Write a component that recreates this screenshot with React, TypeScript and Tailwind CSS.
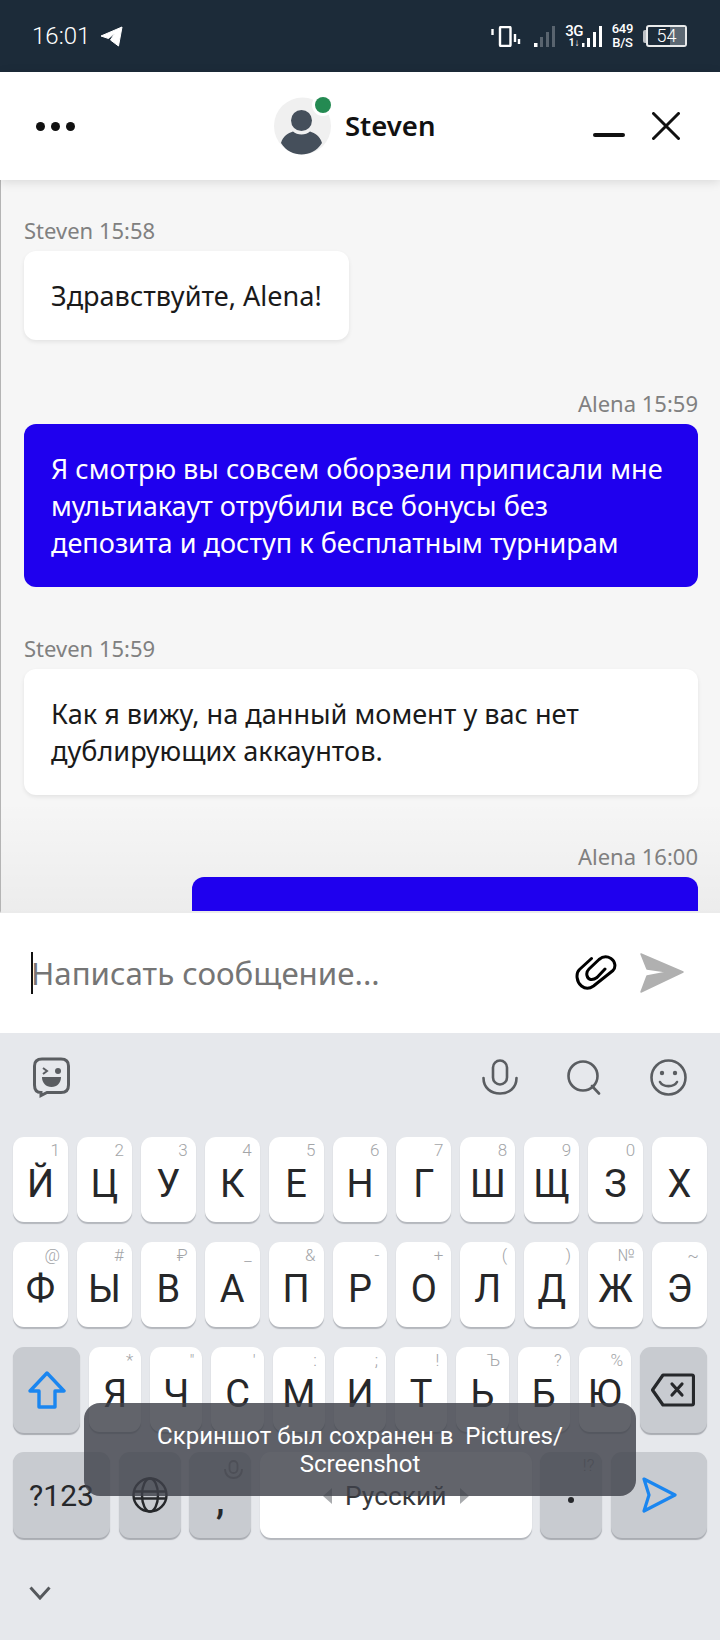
import { ReactNode } from 'react';

const rowOne = [
  ['Й', '1'], ['Ц', '2'], ['У', '3'], ['К', '4'], ['Е', '5'], ['Н', '6'],
  ['Г', '7'], ['Ш', '8'], ['Щ', '9'], ['З', '0'], ['Х', ''],
];
const rowTwo = [
  ['Ф', '@'], ['Ы', '#'], ['В', '₽'], ['А', '_'], ['П', '&'], ['Р', '-'],
  ['О', '+'], ['Л', '('], ['Д', ')'], ['Ж', '№'], ['Э', '~'],
];
const rowThree = [
  ['Я', '*'], ['Ч', '"'], ['С', "'"], ['М', ':'], ['И', ';'], ['Т', '!'],
  ['Ь', 'Ъ'], ['Б', '?'], ['Ю', '%'],
];

function Key({ label, hint }: { label: string; hint: string }) {
  return (
    <div className="relative flex-1 h-[85px] bg-white rounded-[11px] shadow-[0_1.5px_1px_#b4b7bd] flex items-center justify-center pt-[9px]">
      <span className="absolute top-[3px] right-[8px] text-[17px] leading-[20px] font-light text-[#a3a5a8]">{hint}</span>
      <span className="text-[38px] leading-[44px] text-[#262729]">{label}</span>
    </div>
  );
}

function GreyKey({ className, children }: { className: string; children: ReactNode }) {
  return (
    <div className={`relative h-[86px] bg-[#c8cbd0] rounded-[11px] shadow-[0_1.5px_1px_#a9acb2] flex items-center justify-center ${className}`}>
      {children}
    </div>
  );
}

function StatusBar() {
  return (
    <div className="h-[72px] bg-[#1c2b39] flex items-center justify-between pl-[32px] pr-[33px] text-white">
      <div className="flex items-center gap-[10px]">
        <span className="text-[24px] leading-[30px] font-light">16:01</span>
        <svg width="23" height="21" viewBox="0 0 23 21" fill="#fff" stroke="#fff" strokeLinejoin="round">
          <path d="M22 1 L1 10 L8.5 12.5 L15 7 L10.5 14 L18.5 20 Z" />
        </svg>
      </div>
      <div className="flex items-center">
        <svg width="30" height="21" viewBox="0 0 30 21" fill="none" stroke="#fff" className="mr-[13px]">
          <rect x="9" y="1" width="10.5" height="19" strokeWidth="2.4" rx="1" />
          <path d="M1.5 3v6M5.5 3v0" strokeWidth="2.4" />
          <path d="M24 8v8M28 13v5" strokeWidth="2.4" />
        </svg>
        <svg width="21" height="21" viewBox="0 0 21 21" className="mr-[11px]">
          <rect x="0" y="17" width="3.5" height="4" fill="#fff" />
          <rect x="6" y="11" width="3" height="10" fill="#59646f" />
          <rect x="12" y="6" width="3" height="15" fill="#59646f" />
          <rect x="18" y="0" width="3" height="21" fill="#59646f" />
        </svg>
        <div className="flex flex-col items-center w-[17px] mr-[-3px]">
          <span className="text-[15px] font-medium leading-[13px] tracking-[-0.5px]">3G</span>
          <span className="text-[10px] font-bold leading-[10px]">1↓</span>
        </div>
        <svg width="22" height="21" viewBox="0 0 22 21" fill="#fff" className="mr-[10px]">
          <rect x="2" y="17" width="2.5" height="4" />
          <rect x="7" y="12" width="3" height="9" />
          <rect x="13" y="6" width="3" height="15" />
          <rect x="19" y="0" width="3" height="21" />
        </svg>
        <div className="flex flex-col items-center font-medium text-[13px] leading-[14px] mr-[10px] tracking-[-0.3px]">
          <span>649</span>
          <span>B/S</span>
        </div>
        <div className="w-[3px] h-[13px] bg-white/70 rounded-l-[2px]" />
        <div className="relative w-[41px] h-[22px] border-2 border-white/90 rounded-[3px] flex items-center justify-end overflow-hidden">
          <div className="w-[15px] h-full bg-[#5c6873]" />
          <span className="absolute inset-0 flex items-center justify-center text-[18px] font-light leading-none">54</span>
        </div>
      </div>
    </div>
  );
}

function ChatHeader() {
  return (
    <div className="relative z-10 h-[108px] bg-white shadow-[0_2px_10px_rgba(0,0,0,0.12)] flex items-center pl-[36px] pr-[40px]">
      <div className="flex gap-[6px] w-[100px]">
        <div className="w-[9px] h-[9px] rounded-full bg-[#111]" />
        <div className="w-[9px] h-[9px] rounded-full bg-[#111]" />
        <div className="w-[9px] h-[9px] rounded-full bg-[#111]" />
      </div>
      <div className="flex items-center gap-[14px] ml-[138px]">
        <div className="relative">
          <svg width="57" height="58" viewBox="0 0 57 58">
            <circle cx="28.5" cy="29" r="28.5" fill="#f0f0f0" />
            <circle cx="27.5" cy="23.5" r="10.5" fill="#454f5b" />
            <path d="M7 46 C9 39 14 36 19 34.5 C23 38.5 32 38.5 36 34.5 C41 36 46 39 48 46 C43 54 35 57.5 27.5 57.5 C20 57.5 12 54 7 46 Z" fill="#454f5b" />
          </svg>
          <div className="absolute top-[-3px] right-[-3px] w-[22px] h-[22px] rounded-full bg-white flex items-center justify-center">
            <div className="w-[16px] h-[16px] rounded-full bg-[#248a52]" />
          </div>
        </div>
        <span className="text-[27.5px] leading-[34px] font-semibold text-[#111]">Steven</span>
      </div>
      <div className="flex items-center gap-[27px] ml-auto">
        <div className="w-[32px] h-[4px] bg-[#111] rounded-full mt-[18px]" />
        <svg width="28" height="28" viewBox="0 0 28 28" fill="none" stroke="#111" strokeWidth="3" strokeLinecap="round">
          <path d="M1.5 1.5 L26.5 26.5 M26.5 1.5 L1.5 26.5" />
        </svg>
      </div>
    </div>
  );
}

function Message({ author, time, mine, text, className }: { author: string; time: string; mine?: boolean; text: ReactNode; className: string }) {
  return (
    <div className={`flex flex-col ${mine ? 'items-end' : 'items-start'}`}>
      <div className="text-[22px] leading-[30px] text-[#808080] mb-[6px]">{author} {time}</div>
      <div className={`rounded-[12px] px-[27px] text-[27.1px] leading-[37px] ${mine ? 'bg-[#1f00ee] text-white' : 'bg-white text-[#1a1a1a] shadow-[0_2px_4px_rgba(0,0,0,0.08)]'} ${className}`}>
        {text}
      </div>
    </div>
  );
}

function ChatBody() {
  return (
    <div className="relative h-[733px] overflow-hidden bg-[#f6f6f6] border-l border-[#b4b4b4] border-b-2 border-b-[#ebebeb] pl-[23px] pr-[22px] pt-[35px]">
      <div className="absolute left-0 right-0 bottom-0 h-[110px] bg-gradient-to-b from-transparent to-[#0000000a]" />
      <div className="relative flex flex-col gap-[46px]">
        <Message author="Steven" time="15:58" text="Здравствуйте, Alena!" className="py-[26px] mb-[2px]" />
        <Message author="Alena" time="15:59" mine className="py-[26px] w-full" text={<>Я смотрю вы совсем оборзели приписали мне<br />мультиакаут отрубили все бонусы без<br />депозита и доступ к бесплатным турнирам</>} />
        <Message author="Steven" time="15:59" className="py-[26px] w-full" text={<>Как я вижу, на данный момент у вас нет<br />дублирующих аккаунтов.</>} />
        <Message author="Alena" time="16:00" mine className="w-[506px] h-[120px]" text="" />
      </div>
    </div>
  );
}

function InputBar() {
  return (
    <div className="h-[120px] bg-white flex items-center pl-[31px] pr-[36px]">
      <div className="w-[2px] h-[42px] bg-[#111]" />
      <span className="text-[31.3px] leading-[40px] text-[#757575] flex-1 -ml-[2px]">Написать сообщение...</span>
      <svg width="42" height="36" viewBox="0 0 42 36" fill="none" stroke="#000" strokeWidth="3" strokeLinecap="round" strokeLinejoin="round" className="mr-[23px]">
        <path d="M16.5 3.5 L4.5 14.5 C0.5 18.5 1.5 27 6.5 31 C11 34.5 15 33.5 18.5 31 L38 15.5 C41 12.5 40.5 6.5 36 3.5 C31 0.5 27 2 24 4.5 L14 14 C10 18 12 23.5 15.5 24.5 C18 25 20 24 22 22.5 L30 14" />
      </svg>
      <svg width="44" height="40" viewBox="0 0 44 40" fill="#b0b0b0" stroke="#b0b0b0" strokeWidth="1.5" strokeLinejoin="round">
        <path d="M1 1 L43 19 L1 39 L7 23 L28 19 L7 16 Z" />
      </svg>
    </div>
  );
}

function KeyboardToolbar() {
  return (
    <div className="h-[86px] flex items-center pl-[33px] pr-[33px] pt-[2px]">
      <svg width="37" height="41" viewBox="0 0 37 41" fill="none" stroke="#5a5d61" strokeWidth="3">
        <path d="M9 2 H28 C33 2 35.5 4.5 35.5 9 V28 C35.5 33 33 35.5 28 35.5 H14 L8 38.5 V35.5 C4 35.5 1.5 33 1.5 28 V9 C1.5 4.5 4 2 9 2 Z" />
        <path d="M10 11 L14 14 L10 17" strokeWidth="2" />
        <circle cx="25" cy="14" r="3" fill="#5a5d61" stroke="none" />
        <path d="M9 20 H28 C28 26 24 30 18.5 30 C13 30 9 26 9 20 Z" fill="#5a5d61" stroke="none" />
      </svg>
      <div className="ml-auto flex items-center gap-[49px]">
        <svg width="36" height="36" viewBox="0 0 36 36" fill="none" stroke="#5a5d61" strokeWidth="2.6" strokeLinecap="round">
          <rect x="11" y="1.5" width="14" height="24" rx="7" />
          <path d="M1.5 19 C1.5 29 9 34.5 18 34.5 C27 34.5 34.5 29 34.5 19" />
        </svg>
        <svg width="34" height="35" viewBox="0 0 34 35" fill="none" stroke="#5a5d61" strokeWidth="2.6" strokeLinecap="round">
          <circle cx="16" cy="16" r="14.5" />
          <path d="M25 26 L32 33.5" />
        </svg>
        <svg width="37" height="37" viewBox="0 0 37 37" fill="none" stroke="#5a5d61" strokeWidth="2.6" strokeLinecap="round">
          <circle cx="18.5" cy="18.5" r="17" />
          <circle cx="12" cy="14" r="2.2" fill="#5a5d61" stroke="none" />
          <circle cx="25" cy="14" r="2.2" fill="#5a5d61" stroke="none" />
          <path d="M10 23 C13 28.5 24 28.5 27 23" />
        </svg>
      </div>
    </div>
  );
}

function Keyboard() {
  return (
    <div className="relative flex-1 bg-[#e6e8ec] font-['Roboto',sans-serif]">
      <KeyboardToolbar />
      <div className="flex flex-col gap-[20px] px-[13px] pt-[18px]">
        <div className="flex gap-[9px]">
          {rowOne.map(([l, h]) => <Key key={l} label={l} hint={h} />)}
        </div>
        <div className="flex gap-[9px]">
          {rowTwo.map(([l, h]) => <Key key={l} label={l} hint={h} />)}
        </div>
        <div className="flex gap-[9px]">
          <GreyKey className="w-[67px]">
            <svg width="38" height="38" viewBox="0 0 38 38" fill="none" stroke="#1a86f0" strokeWidth="3.4" strokeLinejoin="round">
              <path d="M19 2 L36 20 H27 V36 H11 V20 H2 Z" />
            </svg>
          </GreyKey>
          {rowThree.map(([l, h]) => <Key key={l} label={l} hint={h} />)}
          <GreyKey className="w-[67px]">
            <svg width="44" height="34" viewBox="0 0 44 34" fill="none" stroke="#26282b" strokeWidth="3.2" strokeLinejoin="round" strokeLinecap="round">
              <path d="M12 2 H41 C42 2 42.5 3 42.5 4 V30 C42.5 31 42 32 41 32 H12 L1.5 17 Z" />
              <path d="M21 11 L31 22 M31 11 L21 22" />
            </svg>
          </GreyKey>
        </div>
        <div className="flex gap-[8.6px] -mt-[1px]">
          <GreyKey className="w-[97px] text-[30px] text-[#26282b]">?123</GreyKey>
          <GreyKey className="w-[62px]">
            <svg width="36" height="36" viewBox="0 0 36 36" fill="none" stroke="#26282b" strokeWidth="2.4">
              <circle cx="18" cy="18" r="16.5" />
              <ellipse cx="18" cy="18" rx="8" ry="16.5" />
              <path d="M2 14.5 H34 M2 21.5 H34" />
            </svg>
          </GreyKey>
          <GreyKey className="w-[62px]">
            <svg width="19" height="19" viewBox="0 0 19 19" fill="none" stroke="#8b8d91" strokeWidth="1.8" className="absolute top-[8px] right-[8px]">
              <rect x="5.5" y="1" width="8" height="12" rx="4" />
              <path d="M1 9 C1 15 5 18 9.5 18 C14 18 18 15 18 9" />
            </svg>
            <span className="text-[38px] leading-none text-[#26282b] font-medium mt-[10px]">,</span>
          </GreyKey>
          <div className="relative w-[272px] h-[86px] bg-white rounded-[11px] shadow-[0_1.5px_1px_#b4b7bd] flex items-center justify-center gap-[13px] pt-[2px]">
            <div className="w-0 h-0 border-y-[8px] border-y-transparent border-r-[9px] border-r-[#a9abae]" />
            <span className="text-[26.4px] leading-[32px] text-[#36383b]">Русский</span>
            <div className="w-0 h-0 border-y-[8px] border-y-transparent border-l-[9px] border-l-[#a9abae]" />
          </div>
          <GreyKey className="w-[62px]">
            <span className="absolute top-[3px] right-[8px] text-[17px] leading-[20px] font-light text-[#8b8d91]">!?</span>
            <div className="w-[6px] h-[6px] rounded-full bg-[#26282b] mt-[10px]" />
          </GreyKey>
          <GreyKey className="w-[96px]">
            <svg width="36" height="36" viewBox="0 0 36 36" fill="none" stroke="#1a86f0" strokeWidth="3.2" strokeLinejoin="round">
              <path d="M3 2 L34 18 L3 34 L8 18 Z" />
            </svg>
          </GreyKey>
        </div>
      </div>
      <svg width="22" height="14" viewBox="0 0 22 14" fill="none" stroke="#55585c" strokeWidth="3" className="ml-[29px] mt-[48px]">
        <path d="M1.5 1.5 L11 12 L20.5 1.5" />
      </svg>
      <div className="absolute left-[84px] top-[370px] w-[552px] h-[93px] rounded-[16px] bg-[#3f4149d0] flex items-center justify-center text-center text-[24px] leading-[28px] text-white">
        Скриншот был сохранен в&nbsp;&nbsp;Pictures/<br />Screenshot
      </div>
    </div>
  );
}

export default function App() {
  return (
    <div className="w-[720px] h-[1640px] flex flex-col overflow-hidden bg-white font-['Noto_Sans',sans-serif]">
      <div className="font-['Roboto',sans-serif]">
        <StatusBar />
      </div>
      <ChatHeader />
      <ChatBody />
      <InputBar />
      <Keyboard />
    </div>
  );
}
